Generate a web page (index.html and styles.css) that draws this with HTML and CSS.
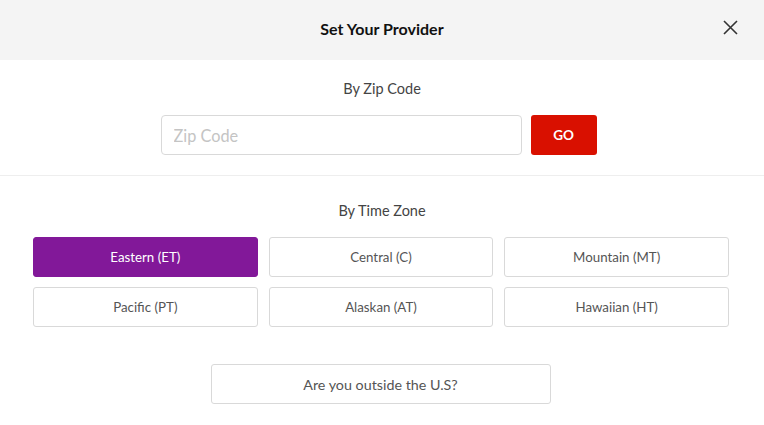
FILE: index.html
```html
<!DOCTYPE html>
<html lang="en">
<head>
<meta charset="utf-8">
<title>Set Your Provider</title>
<link rel="stylesheet" href="styles.css">
</head>
<body>
<div class="modal">
  <header class="modal-header">
    <span></span>
    <h1 class="title">Set Your Provider</h1>
    <button class="close" aria-label="Close">
      <svg width="15" height="15" viewBox="0 0 15 15"><path d="M1 1L14 14M14 1L1 14" stroke="#333" stroke-width="1.6" fill="none"/></svg>
    </button>
  </header>
  <section class="zip">
    <div class="label">By Zip Code</div>
    <div class="zip-row">
      <input class="zip-input" type="text" placeholder="Zip Code">
      <button class="go">GO</button>
    </div>
  </section>
  <section class="tz">
    <div class="label">By Time Zone</div>
    <div class="tz-grid">
      <button class="tz-btn active">Eastern (ET)</button>
      <button class="tz-btn">Central (C)</button>
      <button class="tz-btn">Mountain (MT)</button>
      <button class="tz-btn">Pacific (PT)</button>
      <button class="tz-btn">Alaskan (AT)</button>
      <button class="tz-btn">Hawaiian (HT)</button>
    </div>
    <div class="outside-row">
      <button class="outside">Are you outside the U.S?</button>
    </div>
  </section>
</div>
</body>
</html>
```
FILE: styles.css
```css
* { box-sizing: border-box; }
html, body { margin: 0; padding: 0; background: #fff; }
body { font-family: Lato, "Open Sans", sans-serif; color: #444; }
.modal { width: 764px; }
.modal-header {
  height: 60px;
  background: #f4f4f4;
  display: grid;
  grid-template-columns: 60px 1fr 60px;
  align-items: center;
}
.title { margin: 0 0 3px; text-align: center; font-size: 16px; font-weight: 700; color: #111; }
.close {
  border: 0; background: transparent; padding: 0; width: 15px; height: 15px;
  justify-self: end; margin: 0 26px 6px 0; display: flex;
}
.label { text-align: center; font-size: 14.5px; line-height: 18px; color: #444; }
.zip { padding: 20px 0 20px; border-bottom: 1px solid #eeeeee; }
.zip-row { display: flex; justify-content: center; gap: 9px; margin-top: 17px; padding-right: 7px; }
.zip-input {
  width: 361px; height: 40px; border: 1px solid #d9d9d9; border-radius: 4px;
  padding: 0 12px; font-family: Lato, sans-serif; font-size: 16.3px; color: #333; outline: none;
}
.zip-input::placeholder { color: #c4c4c4; }
.go {
  width: 66px; height: 40px; border: 0; border-radius: 3px; background: #d91000; color: #fff;
  font-family: Lato, sans-serif; font-weight: 700; font-size: 13.5px;
}
.tz { padding-top: 26px; }
.tz-grid {
  display: grid; grid-template-columns: repeat(3, 1fr); column-gap: 11px; row-gap: 10px;
  margin: 17px 35px 0 33px;
}
.tz-btn {
  height: 40px; background: #fff; border: 1px solid #d9d9d9; border-radius: 3px;
  font-family: Lato, sans-serif; font-size: 13.3px; color: #555;
}
.tz-btn.active { background: #821899; border-color: #821899; color: #fff; }
.outside-row { display: flex; justify-content: center; margin-top: 37px; padding-right: 3px; }
.outside {
  width: 340px; height: 40px; background: #fff; border: 1px solid #d9d9d9; border-radius: 3px;
  font-family: Lato, sans-serif; font-size: 14.3px; color: #555;
}
```
